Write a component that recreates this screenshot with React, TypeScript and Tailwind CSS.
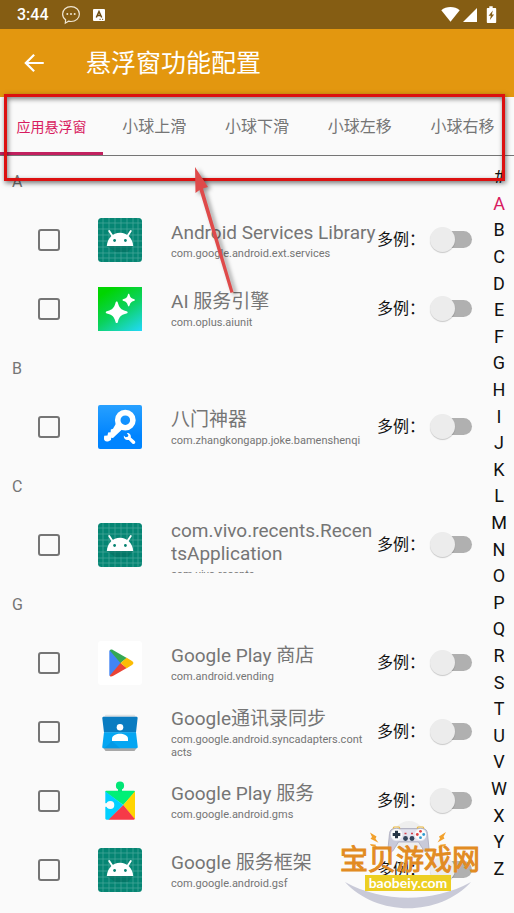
import { useId, useState } from "react";
import type { ReactNode } from "react";

const TABS = ["应用悬浮窗", "小球上滑", "小球下滑", "小球左移", "小球右移"];
const LETTERS = "#ABCDEFGHIJKLMNOPQRSTUVWXYZ".split("");

function AndroidIcon() {
  const lines = [5, 11, 17, 23, 29, 35, 40];
  return (
    <svg viewBox="0 0 44 44" className="size-11" aria-hidden="true">
      <rect width="44" height="44" rx="3.5" fill="#058573" />
      <g stroke="#4aa99b" strokeWidth="0.7">
        {lines.map((p) => (
          <path key={p} d={`M${p} 0V44M0 ${p}H44`} />
        ))}
      </g>
      <path d="M9 28h26l-5 6H17z" fill="#04695c" opacity="0.5" />
      <path d="M11.200 13l3.600 5.500M32.800 13l-3.600 5.500" stroke="#fff" strokeWidth="1.900" strokeLinecap="round" />
      <path d="M8.800 28c.5-7.600 6-13.200 13.200-13.200S34.700 20.400 35.200 28z" fill="#fff" />
      <circle cx="16.600" cy="22.500" r="1.400" fill="#078372" />
      <circle cx="27.400" cy="22.500" r="1.400" fill="#078372" />
    </svg>
  );
}

function SparkleIcon() {
  return (
    <svg viewBox="0 0 44 44" className="size-11" aria-hidden="true">
      <defs>
        <linearGradient id="sparkle-bg" x1="0.350" y1="0" x2="1" y2="1">
          <stop offset="0" stopColor="#00d500" />
          <stop offset="0.450" stopColor="#0bd25c" />
          <stop offset="1" stopColor="#22d8fb" />
        </linearGradient>
      </defs>
      <rect width="44" height="44" fill="url(#sparkle-bg)" />
      <path
        d="M18.700 14.500c.8 0 1 .7 1.300 1.700 1.300 4.600 3 6.400 7.700 7.700 1.200.3 2 .6 2 1.400s-.8 1.100-2 1.400c-4.700 1.300-6.400 3.100-7.700 7.700-.3 1-.5 1.700-1.300 1.700s-1-.7-1.300-1.700c-1.300-4.600-3-6.400-7.700-7.700-1.200-.3-2-.6-2-1.400s.8-1.100 2-1.400c4.700-1.300 6.400-3.100 7.700-7.700.3-1 .5-1.700 1.300-1.700z"
        fill="#fff"
      />
      <path
        d="M30.700 6.700c.5 0 .7.500.9 1.200.8 2.600 1.700 3.500 4.200 4.200.8.200 1.200.5 1.200 1s-.4.800-1.200 1c-2.500.7-3.400 1.600-4.200 4.200-.2.700-.4 1.100-.9 1.100s-.7-.4-.9-1.100c-.8-2.600-1.700-3.500-4.200-4.200-.8-.2-1.200-.5-1.200-1s.4-.8 1.200-1c2.500-.7 3.400-1.600 4.200-4.200.2-.7.4-1.200.9-1.200z"
        fill="#fff"
      />
    </svg>
  );
}

function KeyIcon() {
  return (
    <svg viewBox="0 0 44 44" className="size-11" aria-hidden="true">
      <defs>
        <linearGradient id="key-bg" x1="0" y1="0" x2="0" y2="1">
          <stop offset="0" stopColor="#27a0ff" />
          <stop offset="0.700" stopColor="#0084ff" />
          <stop offset="1" stopColor="#0084ff" />
        </linearGradient>
      </defs>
      <rect width="44" height="44" rx="2" fill="url(#key-bg)" />
      <circle cx="27.300" cy="15.200" r="7.600" fill="none" stroke="#fff" strokeWidth="5.600" />
      <path
        d="M18 18.500l6 6-9 8.500-1.800-.2-.2 2.200-2.400 1.300c-2.600 1-5-.4-4.600-3.200l.2-2.300 3.300-.4.600-3 2.500-.2.200-2.800 2.200-.6z"
        fill="#fff"
      />
      <path
        d="M28.800 28l1.600 2.200-.6 1.600-2.200.4-1.800-1.800c-.4 3 1.800 5.200 5 4.500l3.700 3.900c1.800.9 3.500-.9 2.500-2.600l-4.200-3.700c.6-2.800-1.500-4.800-4-4.500z"
        fill="#fff"
      />
    </svg>
  );
}

function PlayStoreIcon() {
  return (
    <svg viewBox="0 0 44 44" className="size-11" aria-hidden="true">
      <rect width="44" height="44" rx="3" fill="#fff" />
      <path d="M11.300 10v24.500l1 .5L23.500 22 12.300 8.800z" fill="#4285f4" />
      <path d="M11.700 9.500c.6-1.100 1.900-1.200 3.200-.5L28.800 17 22.500 22z" fill="#34a853" />
      <path d="M11.700 34.700c.6 1 1.900 1.100 3.200.4l13.900-8L22.500 22z" fill="#ea4335" />
      <path d="M28.700 16.800l5.300 3.200c1.900 1.100 1.900 2.900 0 4l-5.300 3.200L22.500 22z" fill="#fbbc04" />
    </svg>
  );
}

function ContactsIcon() {
  return (
    <svg viewBox="0 0 44 44" className="size-11" aria-hidden="true">
      <path d="M6 7l1.500-2.300h29L38 7z" fill="#dfe2e4" />
      <path d="M5 37.500l2.500 3.400h29l2.500-3.400z" fill="#a8a8a8" />
      <path d="M5.700 6.700h32.600c1 0 1.500.6 1.300 1.500L38 22.500H6L4.300 8.200c-.1-.9.400-1.500 1.400-1.500z" fill="#0a7cc1" />
      <path d="M6 22.300h32l1.700 14.200c.2 1-.3 1.800-1.400 1.800H5.700c-1.100 0-1.600-.8-1.400-1.800z" fill="#05a6f2" />
      <path d="M14 31l8 7.300H6.500z" fill="#0391dc" opacity="0.600" />
      <circle cx="22" cy="17.200" r="3.300" fill="#fff" />
      <path d="M14 31v-2.500c0-3 4.500-4.800 8-4.800s8 1.800 8 4.800V31z" fill="#fff" />
    </svg>
  );
}

function PlayServicesIcon() {
  return (
    <svg viewBox="0 0 44 44" className="size-11" aria-hidden="true">
      <path d="M8.700 11.700h26.900c.9 0 1.400.5 1.400 1.400L25.300 26 7.300 13c0-.8.5-1.300 1.400-1.300z" fill="#00f076" />
      <path d="M7.300 12.300L25.300 26 11 40.700H8.700c-.9 0-1.400-.5-1.400-1.400z" fill="#00d0ff" />
      <path d="M37 12.300v27c0 .5-.1.800-.4 1L25.300 26z" fill="#ffd500" />
      <path d="M10.500 40.700L25.300 26l11.500 14c-.3.500-.7.700-1.200.7z" fill="#f63a48" />
      <circle cx="22" cy="6.700" r="4.100" fill="#00e676" />
      <path d="M20 9h4v4h-4z" fill="#00e676" />
      <circle cx="12.300" cy="26" r="4" fill="#fafafa" />
      <path d="M6 24.200h5v3.600H6z" fill="#fafafa" />
    </svg>
  );
}

type AppEntry = { name: string; pkg: string; icon: ReactNode };
const SECTIONS: { letter: string; apps: AppEntry[] }[] = [
  {
    letter: "A",
    apps: [
      { name: "Android Services Library", pkg: "com.google.android.ext.services", icon: <AndroidIcon /> },
      { name: "AI 服务引擎", pkg: "com.oplus.aiunit", icon: <SparkleIcon /> },
    ],
  },
  {
    letter: "B",
    apps: [{ name: "八门神器", pkg: "com.zhangkongapp.joke.bamenshenqi", icon: <KeyIcon /> }],
  },
  {
    letter: "C",
    apps: [{ name: "com.vivo.recents.RecentsApplication", pkg: "com.vivo.recents", icon: <AndroidIcon /> }],
  },
  {
    letter: "G",
    apps: [
      { name: "Google Play 商店", pkg: "com.android.vending", icon: <PlayStoreIcon /> },
      { name: "Google通讯录同步", pkg: "com.google.android.syncadapters.contacts", icon: <ContactsIcon /> },
      { name: "Google Play 服务", pkg: "com.google.android.gms", icon: <PlayServicesIcon /> },
      { name: "Google 服务框架", pkg: "com.google.android.gsf", icon: <AndroidIcon /> },
    ],
  },
];

function StatusBar() {
  return (
    <div className="flex h-[29px] items-center bg-[#855d13] pr-[17px] pl-[17px] text-white">
      <span className="pt-px text-base font-medium">3:44</span>
      <svg viewBox="0 0 20 20" className="ml-3 size-5" aria-hidden="true">
        <path
          d="M10 1.600c4.800 0 8.400 3.200 8.400 7.400s-3.600 7.500-8.400 7.500c-.9 0-1.700-.1-2.500-.3l-3.200 2 .3-3.400C2.700 13.400 1.600 11.400 1.600 9c0-4.200 3.600-7.400 8.400-7.400z"
          fill="none"
          stroke="#f0e6d2"
          strokeWidth="1.200"
        />
        <g fill="#f0e6d2">
          <circle cx="6.300" cy="9" r="1" />
          <circle cx="10" cy="9" r="1" />
          <circle cx="13.700" cy="9" r="1" />
        </g>
      </svg>
      <svg viewBox="0 0 12 12" className="ml-3 size-3" aria-hidden="true">
        <rect width="12" height="12" rx="1" fill="#fff" />
        <path d="M3.300 8.500L6 2.500l2.700 6M4.200 6.500h3.600" fill="none" stroke="#6b4a10" strokeWidth="1.500" />
        <path d="M6.500 10.300h1.200M9 10.300h1.200" stroke="#6b4a10" />
      </svg>
      <svg viewBox="0 0 56 18" className="ml-auto h-[18px] w-14" fill="#fff" aria-hidden="true">
        <path d="M.3 4.200C2.800 2.100 6 1 9.500 1s6.700 1.100 9.200 3.200L9.500 15.700z" />
        <path d="M36 2v14H22z" />
        <path
          fillRule="evenodd"
          d="M48.300 1.200V.2h3.400v1.800h2.500c.6 0 1 .4 1 1v13c0 .6-.4 1-1 1h-7.400c-.6 0-1-.4-1-1V3c0-.6.400-1 1-1h1.500zM51.800 4.500l-4.200 5.300h2.200l-.9 4.200 4.200-5.600h-2.200z"
        />
      </svg>
    </div>
  );
}

function AppRow({ app }: { app: AppEntry }) {
  const id = useId();
  return (
    <li className="flex h-[69px] items-center pl-[38px]">
      <input
        id={`${id}-pick`}
        type="checkbox"
        className="size-[22px] shrink-0 appearance-none rounded-[3px] border-2 border-[#757575] checked:bg-[#757575]"
      />
      <span className="ml-[38px] shrink-0">{app.icon}</span>
      <label
        htmlFor={`${id}-pick`}
        className="ml-[29px] flex max-h-[56px] min-w-0 flex-1 flex-col gap-[3px] overflow-hidden pt-[2px] text-[#757575]"
      >
        <span className="shrink-0 text-[19px] leading-[23px] break-all">{app.name}</span>
        <span className="shrink-0 pr-3 text-[11px] leading-[13px] break-all">{app.pkg}</span>
      </label>
      <label htmlFor={`${id}-multi`} className="w-[57px] shrink-0 text-base text-[#111]">
        多例：
      </label>
      <input
        id={`${id}-multi`}
        type="checkbox"
        role="switch"
        className="mr-3 flex h-[17px] w-[38px] shrink-0 appearance-none items-center rounded-full bg-[#b0b0b0] before:-ml-1 before:block before:size-[25px] before:shrink-0 before:rounded-full before:bg-[#ececec] before:shadow-[0_1px_1px_rgba(0,0,0,0.2)] checked:before:ml-[17px]"
      />
    </li>
  );
}

function Annotation() {
  return (
    <div className="pointer-events-none absolute inset-x-0 top-0" aria-hidden="true">
      <div className="absolute top-[94px] right-[9px] left-[4px] h-[87px] border-3 border-[#dc1010] shadow-[1px_2px_5px_rgba(0,0,0,0.55),inset_1px_2px_5px_rgba(0,0,0,0.5)]" />
      <svg viewBox="0 0 60 140" className="absolute top-[160px] left-[185px] h-[140px] w-[60px] drop-shadow-[3px_2px_2px_rgba(0,0,0,0.4)]">
        <path d="M10 7l13 20-5 1.500L48.500 132l-3 1L14.500 30l-4 3z" fill="#df4a4a" />
      </svg>
    </div>
  );
}

function Watermark() {
  return (
    <div className="pointer-events-none absolute right-[33px] bottom-0 h-[93px] w-[144px]">
      <svg viewBox="0 0 144 93" className="absolute inset-0 size-full" aria-hidden="true">
        <circle cx="72" cy="17" r="16" fill="#eeeeee" />
        <path d="M8 62c38 21 88 21 126 0-32 35-94 35-126 0z" fill="#c9cad8" />
        <path
          d="M57 8.500c-3 .4-4 2-4.500 5l-1.500 15c-.1 4.600 3.500 4.700 5.500 1.500l5-8h20l5 8c2 3.200 5.600 3.100 5.500-1.500l-1.500-15c-.5-3-1.500-4.600-4.500-5z"
          fill="#c9cad9"
          stroke="#a9aabb"
          strokeWidth="0.800"
        />
        <path d="M57 9.500h29c4 0 4.500 11-1 11.500H58c-5.500-.5-5-11.500-1-11.500z" fill="#e3e4ee" />
        <circle cx="59.500" cy="14.500" r="5.800" fill="#fafafa" />
        <circle cx="83.500" cy="14.500" r="5.800" fill="#fafafa" />
        <path d="M59.500 10.700v7.600M55.700 14.500h7.600" stroke="#263645" strokeWidth="3" />
        <g fill="#e04545">
          <circle cx="83.500" cy="11.300" r="1.400" />
          <circle cx="80.300" cy="14.500" r="1.400" />
        </g>
        <g fill="#2f9bd0">
          <circle cx="86.700" cy="14.500" r="1.400" />
          <circle cx="83.500" cy="17.700" r="1.400" />
        </g>
        <g fill="#34465c">
          <circle cx="68.500" cy="18.500" r="2.400" />
          <circle cx="75" cy="18.500" r="2.400" />
        </g>
        <path d="M67.500 13.500h2M74 13.500h2" stroke="#d6424c" strokeWidth="1.300" />
        <path d="M56 8.500l1-1.500h5l1 1.500M80 8.500l1-1.500h5l1 1.500" fill="none" stroke="#e8b53c" strokeWidth="1.200" />
        <path
          d="M33 12.500l6.500 4-1 2.200 3 4-8-4 1.500-1.700zM33 24l6 .7-.5 1 2.500 2-7-2zM109 12l-7 4.500 1 2-2.500 4 7-4-1-1.700zM109 24l-6 .7.500 1-2.500 2 7-2z"
          fill="#f2a12c"
        />
      </svg>
      <span className="absolute top-[25px] left-[3px] text-[28px] leading-[32px] whitespace-nowrap text-[#e28b22] [paint-order:stroke] [-webkit-text-stroke:1px_#e28b22]">
        宝贝游戏网
      </span>
      <span className="absolute top-[55px] left-[28px] w-[86px] bg-[#edcf22] text-center font-[Lato,sans-serif] text-sm leading-4 font-bold text-white">
        baobeiy.com
      </span>
    </div>
  );
}

export default function App() {
  const [tab, setTab] = useState(0);
  const [letter, setLetter] = useState("A");
  return (
    <div className="relative flex min-h-screen flex-col overflow-hidden bg-[#fafafa] font-[Roboto,'Noto_Sans_CJK_SC',sans-serif]">
      <StatusBar />
      <header className="flex h-[68px] items-center bg-[#e3970f] pl-[21px] text-white">
        <button type="button" aria-label="返回">
          <svg viewBox="0 0 24 24" className="size-[26px]" fill="currentColor" aria-hidden="true">
            <path d="M21 11H6.830l6-6L11.400 3.600 3 12l8.400 8.400 1.430-1.400-6-6H21z" />
          </svg>
        </button>
        <h1 className="ml-[39px] pt-[2px] text-[25px]">悬浮窗功能配置</h1>
      </header>
      <div role="tablist" className="grid h-[59px] grid-cols-5 border-b border-[#757575]">
        {TABS.map((t, i) => (
          <button
            key={t}
            type="button"
            role="tab"
            aria-selected={i === tab}
            onClick={() => setTab(i)}
            className={
              i === tab
                ? "border-b-3 border-[#c2215f] pt-[5px] text-sm whitespace-nowrap text-[#d81b60]"
                : "border-b-3 border-transparent pt-[5px] text-base whitespace-nowrap text-[#757575]"
            }
          >
            {t}
          </button>
        ))}
      </div>
      <div className="flex flex-1">
        <main className="min-w-0 flex-1">
          {SECTIONS.map((s) => (
            <section key={s.letter}>
              <h2 className="flex h-[49px] items-center pt-[2px] pl-3 text-base text-[#757575]">{s.letter}</h2>
              <ul>
                {s.apps.map((a) => (
                  <AppRow key={a.pkg} app={a} />
                ))}
              </ul>
            </section>
          ))}
        </main>
        <nav className="flex w-[30px] flex-col pt-2 pb-[31px]">
          {LETTERS.map((l) => (
            <button
              key={l}
              type="button"
              onClick={() => setLetter(l)}
              className={
                l === letter
                  ? "min-h-0 flex-1 text-lg leading-6 text-[#d81b60]"
                  : "min-h-0 flex-1 text-lg leading-6 text-[#111]"
              }
            >
              {l}
            </button>
          ))}
        </nav>
      </div>
      <Annotation />
      <Watermark />
    </div>
  );
}
